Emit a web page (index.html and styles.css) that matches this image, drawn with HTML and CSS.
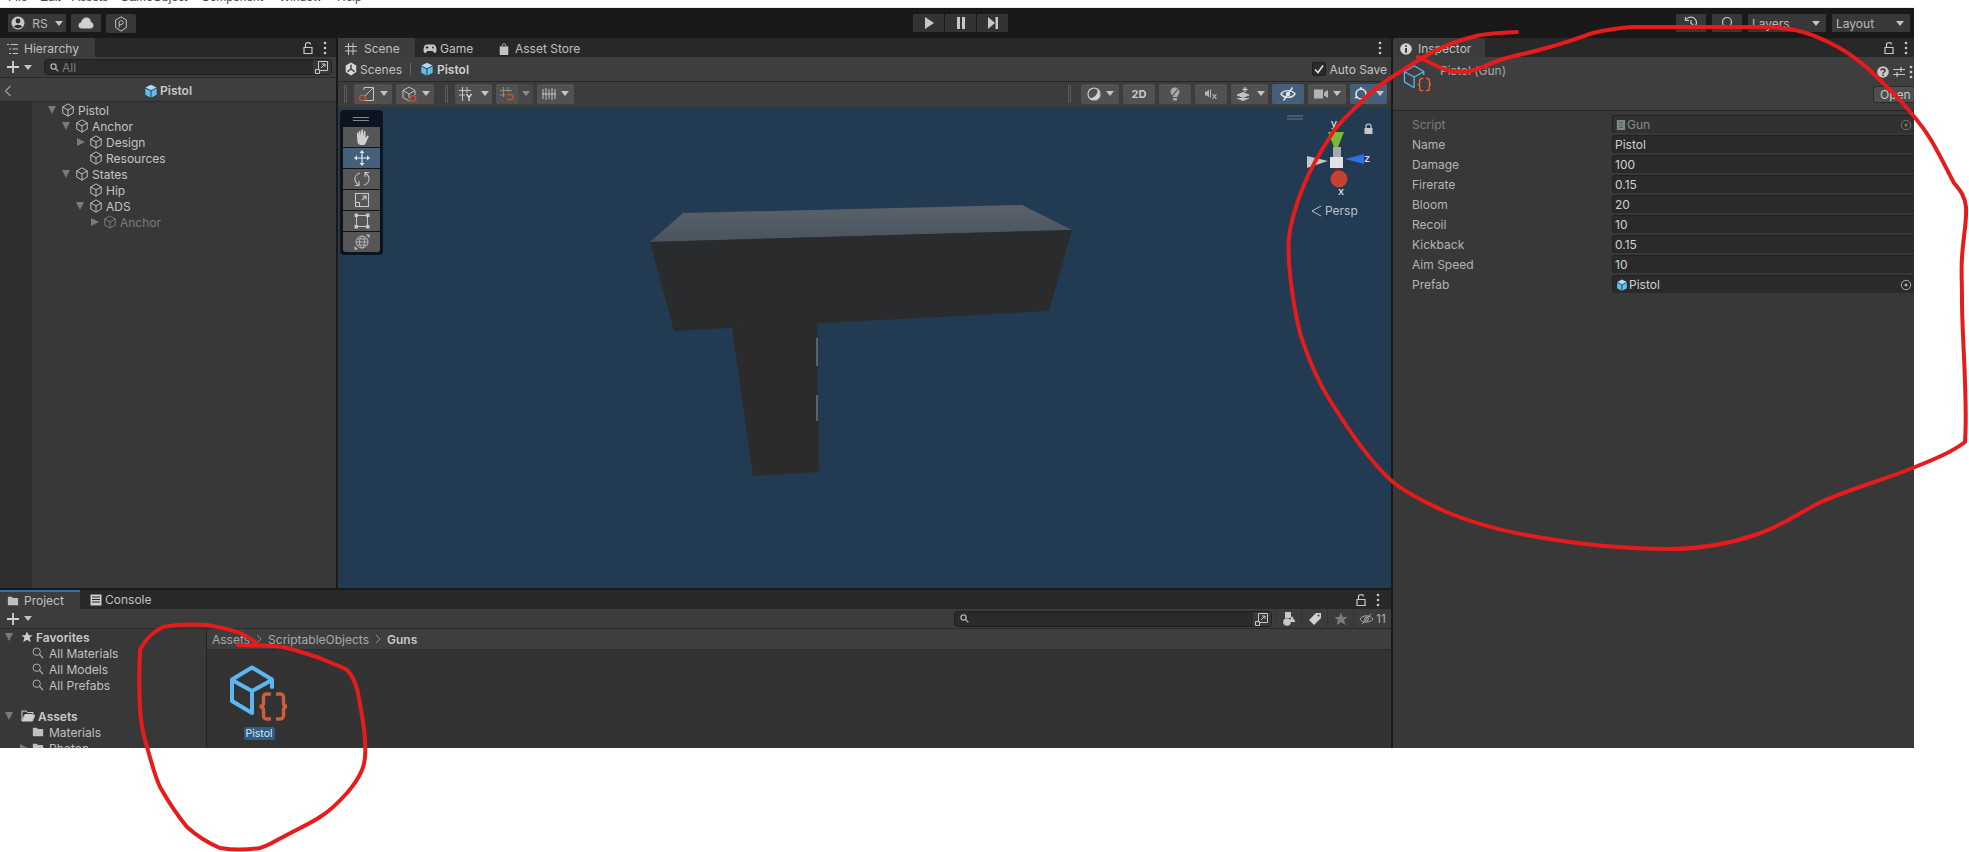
FILE: index.html
```html
<!DOCTYPE html>
<html lang="en">
<head>
<meta charset="utf-8">
<title>Unity Editor</title>
<link rel="stylesheet" href="styles.css">
</head>
<body>
<svg class="defs" aria-hidden="true">
  <defs>
    <symbol id="cube" viewBox="0 0 16 16"><path d="M8 1 14 4.5V11.5L8 15 2 11.5V4.5ZM2 4.5 8 8 14 4.5M8 8V15" fill="none" stroke="currentColor" stroke-width="1.1"/></symbol>
    <symbol id="prefab" viewBox="0 0 16 16"><path d="M8 .8 14.4 4 8 7.2 1.600 4Z" fill="#a9def8"/><path d="M1.500 5 7.400 8V15.500L1.500 12.400Z" fill="#5cbff0"/><path d="M14.500 5 8.600 8V15.500L14.500 12.400Z" fill="#5cbff0"/></symbol>
    <symbol id="lock" viewBox="0 0 12 14"><path d="M2 6.500H10V12.500H2ZM3.500 6.500V3.500C3.500 1 8.500 1 8.500 3.500" fill="none" stroke="currentColor" stroke-width="1.200"/></symbol>
    <symbol id="dots" viewBox="0 0 4 14"><circle cx="2" cy="2" r="1.300" fill="currentColor"/><circle cx="2" cy="7" r="1.300" fill="currentColor"/><circle cx="2" cy="12" r="1.300" fill="currentColor"/></symbol>
    <symbol id="mag" viewBox="0 0 14 14"><circle cx="5.500" cy="5.500" r="4.300" fill="none" stroke="currentColor" stroke-width="1"/><path d="M9 9 13 13" stroke="currentColor" stroke-width="1.300"/></symbol>
    <symbol id="ext" viewBox="0 0 14 14"><path d="M3.500 9V1.500H12.500V10.500H5M.5 9.500H4.500V13.500H.5ZM6 8 10 4M7 4H10V7" fill="none" stroke="currentColor" stroke-width="1"/></symbol>
    <symbol id="folder" viewBox="0 0 14 12"><path d="M1 1H5.500L7 2.500H13V11H1Z" fill="currentColor"/></symbol>
    <symbol id="target" viewBox="0 0 12 12"><circle cx="6" cy="6" r="4.700" fill="none" stroke="currentColor"/><circle cx="6" cy="6" r="1.500" fill="currentColor"/></symbol>
  </defs>
</svg>

<div class="app">
  <nav class="menubar">
    <span class="m1">File</span><span class="m2">Edit</span><span class="m3">Assets</span><span class="m4">GameObject</span><span class="m5">Component</span><span class="m6">Window</span><span class="m7">Help</span>
  </nav>

  <header class="toolbar">
    <div class="tb-left">
      <div class="tb-btn account">
        <svg class="i14" viewBox="0 0 14 14"><circle cx="7" cy="7" r="6.500" fill="#c8c8c8"/><circle cx="7" cy="5" r="2.400" fill="#2d2d2d"/><path d="M2.800 10.800C4 8 10 8 11.200 10.800 9 12.600 5 12.600 2.800 10.800Z" fill="#2d2d2d"/></svg>
        <span>RS</span><i class="tri"></i>
      </div>
      <div class="tb-btn cloud">
        <svg class="i16" viewBox="0 0 16 12"><path d="M4 11.500C1.500 11.500.5 9.800.5 8.300.5 6.500 2 5.500 3 5.500 3.500 2.500 6 .5 8.500 .5 11 .5 12.800 2.500 13 5 14.500 5.300 15.500 6.700 15.500 8.300 15.500 10 14.300 11.500 12.500 11.500Z" fill="#d0d0d0"/></svg>
      </div>
      <div class="tb-btn collab">
        <svg class="i16" viewBox="0 0 16 18"><path d="M8 1 14 4.500V13L8 17 2 13V4.500Z" fill="none" stroke="#c8c8c8" stroke-width="1.100"/><path d="M6 13V7C6 4.500 10.500 4.500 10.500 7.300S6 10 6 10" fill="none" stroke="#c8c8c8" stroke-width="1.100"/></svg>
      </div>
    </div>
    <div class="tb-play">
      <div class="play-btn"><svg class="i12" viewBox="0 0 12 12"><path d="M2 0 11 6 2 12Z" fill="#c8c8c8"/></svg></div>
      <div class="play-btn"><svg class="i12" viewBox="0 0 12 12"><path d="M2 0H5V12H2ZM7 0H10V12H7Z" fill="#c8c8c8"/></svg></div>
      <div class="play-btn"><svg class="i12" viewBox="0 0 12 12"><path d="M1 0 8 6 1 12ZM8.500 0H11V12H8.500Z" fill="#c8c8c8"/></svg></div>
    </div>
    <div class="tb-right">
      <div class="tb-btn history">
        <svg class="i14" viewBox="0 0 14 14"><path d="M2.500 3.500A5.500 5.500 0 1 1 2 9M1.500 1V4.500H5M7 4V7.500L9.500 9" fill="none" stroke="#c8c8c8" stroke-width="1.200"/></svg>
      </div>
      <div class="tb-btn search">
        <svg class="i14" viewBox="0 0 14 14"><circle cx="7" cy="6" r="4.500" fill="none" stroke="#c8c8c8" stroke-width="1.200"/><path d="M10 10 12 13" stroke="#c8c8c8" stroke-width="1.200"/></svg>
      </div>
      <div class="tb-btn drop layers"><span>Layers</span><i class="tri"></i></div>
      <div class="tb-btn drop layout"><span>Layout</span><i class="tri"></i></div>
    </div>
  </header>

  <main class="workspace">
    <div class="left-col">
      <div class="upper">
        <section class="panel hierarchy">
          <div class="tabs">
            <div class="tab tab-h active">
              <svg class="i12" viewBox="0 0 12 12"><path d="M0 1.500H2M3.500 1.500H11M2 6H4M5.500 6H11M2 10.500H4M5.500 10.500H11" stroke="#c0c0c0" fill="none"/></svg>
              <span>Hierarchy</span>
            </div>
            <div class="tab-tools"><svg class="lock"><use href="#lock"/></svg><svg class="dots"><use href="#dots"/></svg></div>
          </div>
          <div class="h-tools">
            <svg class="plus" viewBox="0 0 14 14"><path d="M7 1V13M1 7H13" stroke="#d0d0d0" stroke-width="1.800"/></svg>
            <i class="tri h-tri"></i>
            <div class="searchbox h-search">
              <svg class="i8" viewBox="0 0 14 14"><circle cx="5.500" cy="5.500" r="4" fill="none" stroke="#b0b0b0" stroke-width="2"/><path d="M8.500 8.500 13 13" stroke="#b0b0b0" stroke-width="2"/></svg>
              <span class="s-ph">All</span>
              <span class="s-ext"><svg class="i14"><use href="#ext"/></svg></span>
            </div>
          </div>
          <div class="prefab-bar">
            <svg class="chev" viewBox="0 0 8 12"><path d="M6.500 1 1.500 6 6.500 11" fill="none" stroke="#9a9a9a" stroke-width="1.300"/></svg>
            <div class="prefab-title"><svg class="i14"><use href="#prefab"/></svg><b>Pistol</b></div>
          </div>
          <div class="tree">
            <div class="gutter"></div>
            <ul class="rows">
              <li class="row d0"><i class="arrow down"></i><svg class="i14"><use href="#cube"/></svg><span>Pistol</span></li>
              <li class="row d1"><i class="arrow down"></i><svg class="i14"><use href="#cube"/></svg><span>Anchor</span></li>
              <li class="row d2"><i class="arrow right"></i><svg class="i14"><use href="#cube"/></svg><span>Design</span></li>
              <li class="row d2"><i class="arrow none"></i><svg class="i14"><use href="#cube"/></svg><span>Resources</span></li>
              <li class="row d1"><i class="arrow down"></i><svg class="i14"><use href="#cube"/></svg><span>States</span></li>
              <li class="row d2"><i class="arrow none"></i><svg class="i14"><use href="#cube"/></svg><span>Hip</span></li>
              <li class="row d2"><i class="arrow down"></i><svg class="i14"><use href="#cube"/></svg><span>ADS</span></li>
              <li class="row d3 dim"><i class="arrow right"></i><svg class="i14"><use href="#cube"/></svg><span>Anchor</span></li>
            </ul>
          </div>
        </section>

        <section class="panel scene">
          <div class="tabs">
            <div class="tab tab-scene active">
              <svg class="i12" viewBox="0 0 12 12"><path d="M3.500 0V12M8 0V12M0 3.500H12M0 8H12" stroke="#c4c4c4" fill="none"/></svg>
              <span>Scene</span>
            </div>
            <div class="tab tab-game">
              <svg class="i14" viewBox="0 0 14 10"><path d="M3.500 .5H10.500C12.500 .5 13.500 3 13.500 6 13.500 9 12 10 10.500 8L9.500 7H4.500L3.500 8C2 10 .5 9 .5 6 .5 3 1.500 .5 3.500 .5Z" fill="#c4c4c4"/><circle cx="10" cy="3.500" r="1" fill="#333"/><path d="M2.500 3.500H5.500M4 2V5" stroke="#333"/></svg>
              <span>Game</span>
            </div>
            <div class="tab tab-store">
              <svg class="i12" viewBox="0 0 10 14"><path d="M0 4H10V14H0Z" fill="#c4c4c4"/><path d="M3 4V2C3 .5 7 .5 7 2V4" fill="none" stroke="#c4c4c4"/></svg>
              <span>Asset Store</span>
            </div>
            <div class="tab-tools tools-scene"><svg class="dots"><use href="#dots"/></svg></div>
          </div>
          <div class="crumb-bar">
            <svg class="i14" viewBox="0 0 14 16"><path d="M7 .5 13 4V11.500L7 15.500 1 11.500V4Z" fill="#d8d8d8"/><path d="M7 3V8M7 8 3 11M7 8 11 11" stroke="#3e3e3e" stroke-width="1.600"/></svg>
            <span class="c-scenes">Scenes</span>
            <i class="c-sep"></i>
            <svg class="i14"><use href="#prefab"/></svg>
            <b>Pistol</b>
            <div class="autosave"><i class="check"><svg class="i10" viewBox="0 0 10 10"><path d="M1 5.500 4 8.500 9 1.500" fill="none" stroke="#e4e4e4" stroke-width="1.500"/></svg></i><span>Auto Save</span></div>
          </div>
          <div class="scene-tools">
            <div class="stgroup">
              <i class="grip"></i>
              <div class="sbtn w38">
                <svg class="i16" viewBox="0 0 16 16"><path d="M5 4V1.500H14.500V14.500H5.500M6 10 14 2" fill="none" stroke="#c4c4c4"/><circle cx="3.500" cy="12" r="2.800" fill="none" stroke="#d0552f" stroke-width="1.200"/></svg><i class="tri s-tri"></i>
              </div>
              <div class="sbtn w38">
                <svg class="i16" viewBox="0 0 16 16"><path d="M8 1 14 4.500V9M8 15 2 11.500V4.500L8 1M2 4.500 8 8 14 4.500M8 8V12" fill="none" stroke="#c4c4c4"/><circle cx="12" cy="12.500" r="2.800" fill="none" stroke="#d0552f" stroke-width="1.200"/></svg><i class="tri s-tri"></i>
              </div>
              <i class="grip grip2"></i>
              <div class="split">
                <div class="sbtn w22"><svg class="i14" viewBox="0 0 14 14"><path d="M3.500 0V14M8 0V6M0 3.500H12M0 8H6" stroke="#c4c4c4" fill="none"/><path d="M7.500 7 10 10.500 12.500 7M10 10.500V14" stroke="#e0e0e0" fill="none" stroke-width="1.300"/></svg></div>
                <div class="sbtn w15"><i class="tri"></i></div>
              </div>
              <div class="split">
                <div class="sbtn w22"><svg class="i14" viewBox="0 0 14 14"><path d="M3.500 0V10M8 0V5M0 3.500H12M0 8H5" stroke="#8c8c8c" fill="none"/><path d="M7 7.500H11C13.500 7.500 13.500 12.500 11 12.500H7" stroke="#c0502e" fill="none" stroke-width="1.600"/></svg></div>
                <div class="sbtn w15 off"><i class="tri"></i></div>
              </div>
              <div class="sbtn w37">
                <svg class="i14" viewBox="0 0 14 14"><path d="M1 2V12M4 1V13M7 2V12M10 1V13M13 2V12M0 7H14" stroke="#c4c4c4" fill="none"/></svg><i class="tri s-tri"></i>
              </div>
            </div>
            <div class="stgroup">
              <i class="grip grip3"></i>
              <div class="sbtn w38">
                <svg class="i14" viewBox="0 0 14 14"><circle cx="7" cy="7" r="6" fill="none" stroke="#d0d0d0" stroke-width="1.200"/><path d="M10.500 2.500C11 7 8 10.500 3 11.500 5 13.500 9.500 13.500 11.500 11 13.500 8.500 13 4.500 10.500 2.500Z" fill="#d0d0d0"/></svg><i class="tri s-tri"></i>
              </div>
              <div class="sbtn w32 label">2D</div>
              <div class="sbtn w32"><svg class="i14" viewBox="0 0 10 14"><path d="M5 .5C8 .5 9.500 2.500 9.500 5 9.500 7 7.500 8 7.500 10H2.500C2.500 8 .5 7 .5 5 .5 2.500 2 .5 5 .5ZM3 11H7V13.500H3Z" fill="#a8a8a8"/><path d="M9.500 0 1.500 10" stroke="#515151" stroke-width="1.200"/></svg></div>
              <div class="sbtn w32"><svg class="i14" viewBox="0 0 14 14"><path d="M1 4.500H3L5 2.500V10.500L3 8.500H1Z" fill="#b8b8b8"/><path d="M6.500 2.500V10.500" stroke="#b8b8b8"/><path d="M8.500 7 12.500 12M12.500 7 8.500 12" stroke="#b8b8b8" stroke-width="1.200"/></svg></div>
              <div class="split">
                <div class="sbtn w23"><svg class="i14" viewBox="0 0 14 14"><path d="M1 8 7 5.500 13 8 7 10.500Z M1 11 7 13.500 13 11" fill="#c4c4c4" stroke="#c4c4c4"/><path d="M9 0V5M6.500 2.500H11.500" stroke="#c4c4c4" stroke-width="1.300"/></svg></div>
                <div class="sbtn w14"><i class="tri"></i></div>
              </div>
              <div class="sbtn w32 on"><svg class="i16" viewBox="0 0 16 14"><path d="M1 7C4 2.500 12 2.500 15 7 12 11.500 4 11.500 1 7Z" fill="none" stroke="#e4e4e4" stroke-width="1.400"/><circle cx="8" cy="7" r="2.200" fill="#e4e4e4"/><path d="M12.500 .5 3.500 13.500" stroke="#e4e4e4" stroke-width="1.400"/></svg></div>
              <div class="sbtn w38">
                <svg class="i14" viewBox="0 0 14 12"><path d="M0 1.500H9V10.500H0ZM10 4.500 14 2V10L10 7.500Z" fill="#b4b4b4"/></svg><i class="tri s-tri"></i>
              </div>
              <div class="split">
                <div class="sbtn w22 on"><svg class="i14" viewBox="0 0 14 14"><circle cx="7" cy="7" r="5" fill="none" stroke="#e4e4e4" stroke-width="1.500"/><path d="M7 0V3M1 11 3.500 9.500M13 11 10.500 9.500" stroke="#e4e4e4" stroke-width="1.500"/></svg></div>
                <div class="sbtn w15 on"><i class="tri"></i></div>
              </div>
            </div>
          </div>
          <div class="viewport">
            <svg class="scene-art" viewBox="339 107 1052 481">
              <defs>
                <linearGradient id="topface" x1="0" y1="0" x2="0" y2="1"><stop offset="0" stop-color="#5a6169"/><stop offset="1" stop-color="#485460"/></linearGradient>
              </defs>
              <path d="M683 213 1022 205 1072 230 650 242Z" fill="url(#topface)"/>
              <path d="M650 242 1072 230 1049 311 674 331Z" fill="#2a2b2c"/>
              <path d="M732 328 817 323 819 472 753 476Z" fill="#2b2b2c"/>
              <path d="M817 338V366M817 395V421" stroke="#8d98a2" stroke-width="1"/>
              <path d="M1287 116H1303M1287 119H1303" stroke="#6e7d8c"/>
              <path d="M1364.500 128H1372.500V134H1364.500Z" fill="#c8c8c8"/><path d="M1366 128V126C1366 123.500 1371 123.500 1371 126V128" fill="none" stroke="#c8c8c8" stroke-width="1.200"/>
              <path d="M1328 132H1344L1336 152Z" fill="#7ab83a"/>
              <path d="M1333 147H1341V157H1333Z" fill="#a8a8a8"/>
              <path d="M1307 156 1328 161 1307 168Z" fill="#c6c6c6"/>
              <path d="M1364 154V164L1345 159Z" fill="#2d6fe8"/>
              <path d="M1337 166 1331 176H1347Z" fill="#6e2a28"/>
              <circle cx="1339" cy="179" r="8.500" fill="#c8412f"/>
              <path d="M1330 157H1343V168H1330Z" fill="#dfe1e4"/>
              <text class="axis" x="1334" y="127" text-anchor="middle">y</text>
              <text class="axis" x="1367" y="162" text-anchor="middle">z</text>
              <text class="axis" x="1341" y="195" text-anchor="middle">x</text>
              <path d="M1321 206 1312 211 1321 216" fill="none" stroke="#b9c2cb" stroke-width="1"/>
              <text class="persp" x="1325" y="215">Persp</text>
            </svg>
            <div class="tools-overlay">
              <div class="ov-grip"></div>
              <div class="ov-btn"><svg class="i16" viewBox="0 0 16 16"><path d="M3 7V4C3 3 4.500 3 4.500 4V7L5 2.500C5 1.500 6.500 1.500 6.500 2.500V7L7.500 1C7.500 0 9 0 9 1V7L10 2.500C10 1.500 11.500 1.500 11.500 2.500V9L13 7C14 6 15 7 14.500 8L11.500 14.500C11 15.500 10 16 9 16H7C5 16 3.500 14.500 3.500 13Z" fill="#d0d0d0"/></svg></div>
              <div class="ov-btn on"><svg class="i16" viewBox="0 0 16 16"><path d="M8 2V14M2 8H14" stroke="#dfe6ee" stroke-width="1.200"/><path d="M8 0 10.500 3H5.500ZM8 16 10.500 13H5.500ZM0 8 3 5.500V10.500ZM16 8 13 5.500V10.500Z" fill="#dfe6ee"/></svg></div>
              <div class="ov-btn"><svg class="i16" viewBox="0 0 16 16"><path d="M6 2C2.500 3 .5 6 1 9 1.500 11.500 3 13 5 14M5 10V14.500H1M10 14C13.500 13 15.500 10 15 7 14.500 4.500 13 3 11 2M11 6V1.500H15" fill="none" stroke="#c8c8c8" stroke-width="1.100"/></svg></div>
              <div class="ov-btn"><svg class="i16" viewBox="0 0 16 16"><path d="M1.500 1.500H14.500V14.500H1.500ZM1.500 10.500H5.500V14.500M8 8 12 4M8.500 4H12V7.500" fill="none" stroke="#c8c8c8" stroke-width="1.100"/></svg></div>
              <div class="ov-btn"><svg class="i16" viewBox="0 0 16 16"><path d="M4 2.500H12M4 13.500H12M2.500 4V12M13.500 4V12" stroke="#c8c8c8"/><path d="M.5 .5H4V4H.5ZM12 .5H15.500V4H12ZM.5 12H4V15.500H.5ZM12 12H15.500V15.500H12Z" fill="#c8c8c8"/></svg></div>
              <div class="ov-btn"><svg class="i16" viewBox="0 0 16 16"><circle cx="8" cy="8" r="6" fill="none" stroke="#b4b4b4"/><ellipse cx="8" cy="8" rx="2.500" ry="6" fill="none" stroke="#b4b4b4"/><path d="M2 8H14M3 5H13M3 11H13" stroke="#b4b4b4"/><path d="M12 .5H15.500V4ZM4 15.500H.5V12Z" fill="#c8c8c8"/></svg></div>
            </div>
          </div>
        </section>
      </div>

      <section class="panel project">
        <div class="tabs">
          <div class="tab tab-project active">
            <svg class="i12"><use href="#folder"/></svg><span>Project</span>
          </div>
          <div class="tab tab-console">
            <svg class="i12" viewBox="0 0 12 12"><path d="M.5 .5H11.500V11.500H.5Z" fill="#cfcfcf"/><path d="M2 3H10M2 5.500H10M2 8H10" stroke="#2a2a2a"/></svg><span>Console</span>
          </div>
          <div class="tab-tools tools-project"><svg class="lock"><use href="#lock"/></svg><svg class="dots"><use href="#dots"/></svg></div>
        </div>
        <div class="p-tools">
          <svg class="plus" viewBox="0 0 14 14"><path d="M7 1V13M1 7H13" stroke="#d0d0d0" stroke-width="1.800"/></svg>
          <i class="tri h-tri"></i>
          <div class="searchbox p-search">
            <svg class="i8" viewBox="0 0 14 14"><circle cx="5.500" cy="5.500" r="4" fill="none" stroke="#b0b0b0" stroke-width="2"/><path d="M8.500 8.500 13 13" stroke="#b0b0b0" stroke-width="2"/></svg>
            <span class="s-ext"><svg class="i14"><use href="#ext"/></svg></span>
          </div>
          <div class="p-btn"><svg class="i14" viewBox="0 0 14 14"><path d="M3 0H9V6H3Z" fill="#c8c8c8"/><circle cx="5" cy="10" r="3.800" fill="#c8c8c8"/><path d="M10 4 13.500 10H7Z" fill="#c8c8c8"/></svg></div>
          <div class="p-btn"><svg class="i14" viewBox="0 0 14 14"><path d="M1 8 8 1H13V6L6 13Z" fill="#d0d0d0"/><circle cx="10.500" cy="3.500" r="1" fill="#3c3c3c"/></svg></div>
          <div class="p-btn"><svg class="i14" viewBox="0 0 14 14"><path d="M7 .5 9 5H13.500L10 8 11.500 13 7 10.200 2.500 13 4 8 .5 5H5Z" fill="#7a7a7a"/></svg></div>
          <div class="p-btn wide"><svg class="i14 wide-eye" viewBox="0 0 16 12"><path d="M1 6C4 1.500 11 1.500 15 6 11 10.500 4 10.500 1 6Z" fill="none" stroke="#b0b0b0"/><path d="M13 .5 3 11.500" stroke="#b0b0b0"/><circle cx="8" cy="6" r="2" fill="none" stroke="#b0b0b0"/></svg><span>11</span></div>
        </div>
        <div class="p-body">
          <aside class="p-tree">
            <div class="pt-row head"><i class="arrow down pa"></i><svg class="i12" viewBox="0 0 14 14"><path d="M7 .5 9 5H13.500L10 8 11.500 13 7 10.200 2.500 13 4 8 .5 5H5Z" fill="#cfcfcf"/></svg><b>Favorites</b></div>
            <div class="pt-row sub"><svg class="i12"><use href="#mag"/></svg><span>All Materials</span></div>
            <div class="pt-row sub"><svg class="i12"><use href="#mag"/></svg><span>All Models</span></div>
            <div class="pt-row sub"><svg class="i12"><use href="#mag"/></svg><span>All Prefabs</span></div>
            <div class="pt-row head assets"><i class="arrow down pa"></i><svg class="i14" viewBox="0 0 14 12"><path d="M1 11V1H5L6.500 2.500H12V4.500H4L1 11H11.500L14 4.500" fill="none" stroke="#cfcfcf"/><path d="M4 5H13.500L11 11H1.500Z" fill="#cfcfcf"/></svg><b>Assets</b></div>
            <div class="pt-row sub"><svg class="i12"><use href="#folder"/></svg><span>Materials</span></div>
            <div class="pt-row sub photon"><i class="arrow right pb"></i><svg class="i12"><use href="#folder"/></svg><span>Photon</span></div>
          </aside>
          <div class="p-main">
            <div class="breadcrumbs">
              <span>Assets</span><svg class="bc" viewBox="0 0 6 10"><path d="M1 1 5 5 1 9" fill="none" stroke="#8c8c8c"/></svg>
              <span>ScriptableObjects</span><svg class="bc" viewBox="0 0 6 10"><path d="M1 1 5 5 1 9" fill="none" stroke="#8c8c8c"/></svg>
              <b>Guns</b>
            </div>
            <div class="assets-grid">
              <figure class="asset">
                <svg class="asset-icon" viewBox="230 665 60 58">
                  <path d="M273 687V679.500L253 667.500 233 679.500V701L253 713M233 680 253 691 273 680M253 691V713" fill="none" stroke="#5db7f3" stroke-width="4" stroke-linejoin="round" stroke-linecap="round"/>
                  <path d="M272 694H268C265 694 264.500 695.500 264.500 698V703C264.500 705.500 263 706.500 260.500 706.500 263 706.500 264.500 707.500 264.500 710V715C264.500 717.500 265 719 268 719H272M277 694H281C284 694 284.500 695.500 284.500 698V703C284.500 705.500 286 706.500 288 706.500 286 706.500 284.500 707.500 284.500 710V715C284.500 717.500 284 719 281 719H277" fill="none" stroke="#cf5f3c" stroke-width="3.400"/>
                </svg>
                <figcaption>Pistol</figcaption>
              </figure>
            </div>
          </div>
        </div>
      </section>
    </div>

    <section class="panel inspector">
      <div class="tabs">
        <div class="tab tab-insp active">
          <svg class="i12" viewBox="0 0 12 12"><circle cx="6" cy="6" r="5.800" fill="#d4d4d4"/><path d="M6 2.200V3.800M6 5V9.800" stroke="#333" stroke-width="1.800"/></svg>
          <span>Inspector</span>
        </div>
        <div class="tab-tools tools-insp"><svg class="lock"><use href="#lock"/></svg><svg class="dots"><use href="#dots"/></svg></div>
      </div>
      <div class="insp-head">
        <svg class="insp-icon" viewBox="230 665 60 58">
          <path d="M273 687V679.500L253 667.500 233 679.500V701L253 713M233 680 253 691 273 680M253 691V713" fill="none" stroke="#5db7f3" stroke-width="2.600" stroke-linejoin="round"/>
          <path d="M272 694H268C265 694 264.500 695.500 264.500 698V703C264.500 705.500 263 706.500 260.500 706.500 263 706.500 264.500 707.500 264.500 710V715C264.500 717.500 265 719 268 719H272M277 694H281C284 694 284.500 695.500 284.500 698V703C284.500 705.500 286 706.500 288 706.500 286 706.500 284.500 707.500 284.500 710V715C284.500 717.500 284 719 281 719H277" fill="none" stroke="#e0663a" stroke-width="2.800"/>
        </svg>
        <span class="insp-title">Pistol (Gun)</span>
        <div class="insp-actions">
          <div class="insp-icons">
            <svg class="i12" viewBox="0 0 12 12"><circle cx="6" cy="6" r="5.800" fill="#c8c8c8"/><path d="M4 4.500C4 2.500 8 2.500 8 4.500 8 6 6 6 6 7.500M6 8.500V10" fill="none" stroke="#333" stroke-width="1.500"/></svg>
            <svg class="i12" viewBox="0 0 12 12"><path d="M0 3.500H12M0 8.500H12M8 1V6M4 6V11" stroke="#c8c8c8" stroke-width="1.200"/></svg>
            <svg class="dots"><use href="#dots"/></svg>
          </div>
          <div class="open-btn">Open</div>
        </div>
      </div>
      <div class="fields">
        <div class="field dim"><label>Script</label><div class="val"><svg class="i10" viewBox="0 0 10 12"><path d="M0 0H10V12H0Z" fill="#7d8a80"/><path d="M3 3H7M3 6H7M3 9H7" stroke="#3c4a40"/></svg><span>Gun</span><svg class="pick"><use href="#target"/></svg></div></div>
        <div class="field"><label>Name</label><div class="val txt">Pistol</div></div>
        <div class="field"><label>Damage</label><div class="val txt">100</div></div>
        <div class="field"><label>Firerate</label><div class="val txt">0.15</div></div>
        <div class="field"><label>Bloom</label><div class="val txt">20</div></div>
        <div class="field"><label>Recoil</label><div class="val txt">10</div></div>
        <div class="field"><label>Kickback</label><div class="val txt">0.15</div></div>
        <div class="field"><label>Aim Speed</label><div class="val txt">10</div></div>
        <div class="field"><label>Prefab</label><div class="val"><svg class="i10 i-pf"><use href="#prefab"/></svg><span>Pistol</span><svg class="pick"><use href="#target"/></svg></div></div>
      </div>
    </section>
  </main>
</div>

<svg class="annotation" viewBox="0 0 1969 852" aria-hidden="true">
  <path class="ink" d="M1517 32C1500 33 1488 33 1476 36C1455 41 1438 48 1422 58C1400 72 1378 84 1360 103C1345 118 1336 126 1330 137C1318 155 1310 170 1303 187C1296 205 1291 220 1289 237C1287 258 1292 300 1300 333C1308 358 1318 382 1331 402C1350 432 1370 462 1394 483C1412 497 1428 503 1444 511C1470 522 1498 530 1526 535C1580 545 1625 549 1670 549C1703 549 1732 543 1758 534C1782 526 1800 512 1821 502C1852 488 1884 480 1915 467C1935 459 1952 452 1965 442C1968 400 1962 340 1962 300C1962 280 1961 270 1962 258C1963 238 1967 222 1966 207C1965 196 1960 190 1954 183C1946 168 1940 155 1931 140C1925 130 1918 121 1911 113C1901 100 1889 89 1877 77C1865 65 1852 55 1838 47C1825 40 1810 33 1795 30C1775 26 1760 27 1748 27H1632C1620 28 1605 30 1593 33C1578 38 1562 44 1546 48C1530 53 1515 55 1500 60C1488 64 1477 71 1465 72C1455 73 1448 71 1441 68C1433 64 1425 60 1418 57"/>
  <path class="ink" d="M238 645C255 646 270 645 283 647C296 650 308 654 320 658C330 663 339 665 347 670C353 676 356 684 358 693C361 710 365 728 365 743C366 755 365 763 362 770C358 780 353 786 347 793C338 803 330 811 320 817C308 825 295 830 283 837C275 841 268 846 260 848C247 850 233 850 220 848C208 843 197 836 187 827C177 815 168 801 160 787C154 774 151 760 147 747C143 735 141 722 140 710C139 690 139 670 140 650C145 640 152 632 163 627C177 624 192 624 207 625C219 627 230 629 240 633C247 636 253 640 258 645"/>
</svg>
</body>
</html>
```

FILE: styles.css
```css
* { box-sizing: border-box; }
html, body { margin: 0; padding: 0; }
body {
  width: 1969px;
  height: 852px;
  background: #fff;
  font-family: Inter, "Noto Sans", sans-serif;
  font-size: 12px;
  color: #c4c4c4;
  position: relative;
  overflow: hidden;
}
ul { list-style: none; margin: 0; padding: 0; }
figure { margin: 0; }
i { font-style: normal; display: block; }
b { font-weight: 600; }
svg { display: block; flex: none; }
.defs { position: absolute; width: 0; height: 0; }

.i8 { width: 9px; height: 9px; }
.i10 { width: 10px; height: 10px; }
.i12 { width: 12px; height: 12px; }
.i14 { width: 14px; height: 14px; }
.i16 { width: 16px; height: 16px; }

.app { width: 1914px; height: 748px; display: flex; flex-direction: column; }

/* clipped menu: fixed slots that match the menu's item spacing */
.menubar {
  height: 8px;
  overflow: hidden;
  background: #fff;
  border-bottom: 1px solid #ececec;
  color: #444;
  display: flex;
  padding-left: 8px;
  font-family: "Liberation Sans", Arial, sans-serif;
  font-size: 12px;
  line-height: 12px;
}
.menubar span { margin-top: -9px; height: 16px; flex: none; }
.m1 { width: 32px; }
.m2 { width: 32px; }
.m3 { width: 48px; }
.m4 { width: 81px; }
.m5 { width: 78px; }
.m6 { width: 58px; }
.m7 { width: 30px; }

/* top toolbar */
.toolbar {
  height: 30px;
  background: #191919;
  display: flex;
  align-items: flex-start;
  justify-content: space-between;
  padding: 6px 4px 0 8px;
  position: relative;
}
.tb-left, .tb-right, .tb-play { display: flex; }
.tb-left { gap: 5px; }
.tb-btn {
  height: 18px;
  background: #383838;
  display: flex;
  align-items: center;
  justify-content: center;
  color: #b8b8b8;
}
.account { width: 58px; gap: 7px; }
.cloud { width: 30px; }
.collab { width: 30px; height: 19px; border-radius: 2px; }
.tri {
  width: 0; height: 0;
  border-left: 4px solid transparent;
  border-right: 4px solid transparent;
  border-top: 5px solid #c4c4c4;
}
.tb-play { position: absolute; left: 913px; top: 6px; gap: 1px; }
.play-btn { width: 31px; height: 18px; background: #333; display: flex; align-items: center; justify-content: center; }
.tb-right { gap: 6px; }
.history, .search { width: 30px; }
.drop { width: 78px; justify-content: space-between; padding: 0 6px 0 4px; }

/* workspace */
.workspace { flex: 1; min-height: 0; display: flex; background: #191919; gap: 2px; }
.left-col { width: 1391px; display: flex; flex-direction: column; gap: 2px; }
.upper { height: 550px; display: flex; gap: 2px; }
.panel { display: flex; flex-direction: column; background: #383838; overflow: hidden; min-width: 0; }
.hierarchy { width: 336px; }
.scene { flex: 1; }
.project { flex: 1; min-height: 0; }
.inspector { flex: 1; }

.tabs { height: 19px; background: #282828; display: flex; flex: none; position: relative; }
.tab { display: flex; align-items: center; gap: 5px; height: 19px; color: #c0c0c0; font-size: 12px; padding: 2px 0 0 7px; }
.tab.active { background: #3c3c3c; }
.tab-h { width: 95px; }
.tab-scene { width: 77px; gap: 7px; }
.tab-game { width: 83px; padding-left: 8px; gap: 3px; }
.tab-store { padding-left: 0; gap: 5px; }
.tab-project { width: 80px; border-top: 2px solid #3a72a8; padding-top: 0; gap: 5px; }
.tab-console { padding: 0 0 0 10px; gap: 3px; }
.tab-insp { width: 92px; border-radius: 3px 3px 0 0; gap: 6px; }
.tab-tools { margin-left: auto; display: flex; align-items: center; gap: 9px; padding-right: 9px; color: #c8c8c8; }
.lock { width: 12px; height: 14px; }
.dots { width: 4px; height: 14px; color: #c8c8c8; }

/* hierarchy */
.h-tools { height: 21px; background: #3c3c3c; border-bottom: 1px solid #2a2a2a; display: flex; align-items: center; padding-left: 6px; flex: none; }
.plus { width: 14px; height: 14px; }
.h-tri { margin-left: 4px; border-width: 5px 4px 0 4px; }
.searchbox { height: 16px; background: #2a2a2a; border: 1px solid #202020; border-radius: 4px; display: flex; align-items: center; padding-left: 5px; position: relative; color: #888; }
.h-search { width: 288px; margin-left: 12px; gap: 3px; }
.s-ph { color: #7c7c7c; font-size: 12px; }
.s-ext { margin-left: auto; width: 18px; height: 14px; background: #383838; display: flex; align-items: center; justify-content: center; color: #c8c8c8; border-radius: 0 3px 3px 0; }
.prefab-bar { height: 24px; background: #3e3e3e; border-bottom: 1px solid #2a2a2a; display: flex; align-items: center; padding: 2px 0 0 4px; flex: none; position: relative; }
.chev { width: 8px; height: 12px; }
.prefab-title { display: flex; align-items: center; gap: 2px; margin-left: 132px; font-size: 12px; color: #c8c8c8; }
.tree { flex: 1; display: flex; min-height: 0; }
.gutter { width: 32px; background: #2e2e2e; flex: none; }
.rows { flex: 1; }
.row { height: 16px; display: flex; align-items: center; font-size: 12px; color: #c4c4c4; }
.row svg { color: #c4c4c4; margin-right: 3px; }
.d0 { padding-left: 15px; }
.d1 { padding-left: 29px; }
.d2 { padding-left: 43px; }
.d3 { padding-left: 57px; }
.row.dim, .row.dim svg { color: #7b7b7b; }
.arrow { width: 14px; height: 10px; flex: none; position: relative; }
.arrow.down::before {
  content: ""; position: absolute; left: 1px; top: 1px;
  border-left: 4px solid transparent; border-right: 4px solid transparent; border-top: 8px solid #7a7a7a;
}
.arrow.right::before {
  content: ""; position: absolute; left: 2px; top: 1px;
  border-top: 4px solid transparent; border-bottom: 4px solid transparent; border-left: 8px solid #7a7a7a;
}

/* scene */
.crumb-bar { height: 25px; background: #3e3e3e; border-bottom: 1px solid #262626; display: flex; align-items: center; padding: 0 4px 0 6px; flex: none; color: #c4c4c4; }
.c-scenes { margin-left: 2px; }
.c-sep { width: 1px; height: 12px; background: #666; margin: 0 9px 0 8px; }
.crumb-bar b { margin-left: 3px; color: #d0d0d0; }
.autosave { margin-left: auto; display: flex; align-items: center; gap: 3px; }
.check { width: 14px; height: 14px; background: #2a2a2a; border: 1px solid #1c1c1c; border-radius: 2px; display: flex; align-items: center; justify-content: center; }
.scene-tools { height: 25px; background: #3c3c3c; display: flex; justify-content: space-between; align-items: center; padding: 0 4px 2px 6px; flex: none; }
.stgroup { display: flex; align-items: center; gap: 4px; }
.grip { width: 3px; height: 18px; border-left: 1px solid #5c5c5c; border-right: 1px solid #5c5c5c; margin-right: 3px; }
.grip2 { margin-left: 7px; }
.grip3 { margin-right: 6px; }
.sbtn { height: 20px; background: #515151; border-radius: 2px; display: flex; align-items: center; justify-content: center; gap: 5px; }
.s-tri { border-width: 5px 4px 0 4px; }
.w38 { width: 38px; }
.w37 { width: 37px; }
.w32 { width: 32px; }
.w22 { width: 22px; border-radius: 2px 0 0 2px; }
.w23 { width: 23px; border-radius: 2px 0 0 2px; }
.w15 { width: 15px; border-radius: 0 2px 2px 0; }
.w14 { width: 14px; border-radius: 0 2px 2px 0; }
.split { display: flex; gap: 0; }
.sbtn.off { opacity: .6; }
.sbtn.on { background: #46607c; }
.label { font-weight: 700; color: #c8c8c8; font-size: 11px; }

.viewport { flex: 1; min-height: 0; background: #223a52; position: relative; margin-left: 1px; }
.scene-art { position: absolute; inset: 0; width: 100%; height: 100%; }
.axis { font-family: Inter, sans-serif; font-size: 11px; fill: #d8dde2; font-weight: 500; }
.persp { font-family: Inter, sans-serif; font-size: 12px; fill: #b9c2cb; }
.tools-overlay {
  position: absolute;
  left: 1px; top: 3px;
  width: 43px;
  padding: 17px 3px 3px;
  background: #0c1420;
  border-radius: 4px;
  display: flex;
  flex-direction: column;
  gap: 1px;
}
.ov-grip { position: absolute; left: 13px; top: 7px; width: 16px; height: 4px; border-top: 1px solid #828a92; border-bottom: 1px solid #828a92; }
.ov-btn { height: 20px; background: #565656; display: flex; align-items: center; justify-content: center; }
.ov-btn:last-child { border-radius: 0 0 3px 3px; }
.ov-btn.on { background: #46607c; }

/* project */
.tools-project { padding-right: 11px; }
.p-tools { height: 20px; background: #3c3c3c; border-bottom: 1px solid #2a2a2a; display: flex; align-items: center; padding-left: 6px; flex: none; }
.p-search { width: 318px; margin-left: auto; margin-right: 3px; }
.p-btn { width: 26px; height: 20px; border-left: 1px solid #333; display: flex; align-items: center; justify-content: center; }
.p-btn.wide { width: 38px; gap: 2px; justify-content: flex-start; padding-left: 5px; font-size: 12px; color: #aaa; }
.wide-eye { width: 15px; }
.p-body { flex: 1; display: flex; min-height: 0; }
.p-tree { width: 207px; background: #383838; border-right: 1px solid #242424; flex: none; overflow: hidden; }
.pt-row { height: 16px; display: flex; align-items: center; gap: 6px; color: #c0c0c0; }
.pt-row b { color: #c8c8c8; }
.pt-row.head { padding-left: 4px; gap: 3px; }
.pt-row.sub { padding-left: 32px; gap: 5px; }
.pt-row.assets { margin-top: 15px; }
.pa { width: 14px; }
.photon { position: relative; }
.pb { position: absolute; left: 18px; top: 3px; }
.p-main { flex: 1; background: #333; display: flex; flex-direction: column; min-width: 0; }
.breadcrumbs { height: 21px; background: #3e3e3e; border-bottom: 1px solid #2c2c2c; display: flex; align-items: center; gap: 6px; padding-left: 5px; color: #aaa; flex: none; }
.breadcrumbs b { color: #c8c8c8; }
.bc { width: 6px; height: 10px; }
.assets-grid { flex: 1; padding: 15px 0 0 22px; position: relative; }
.asset { width: 60px; display: flex; flex-direction: column; align-items: center; gap: 4px; }
.asset-icon { width: 60px; height: 58px; }
.asset figcaption { background: #2c5d87; color: #dfe6ec; font-size: 10.5px; line-height: 13px; padding: 0 2px; border-radius: 2px; width: 31px; text-align: center; }

/* inspector */
.tools-insp { padding-right: 6px; gap: 9px; }
.insp-head { height: 54px; background: #3e3e3e; border-bottom: 1px solid #262626; display: flex; flex: none; position: relative; padding-left: 10px; }
.insp-icon { width: 29px; height: 29px; margin-top: 7px; }
.insp-title { margin: 6px 0 0 8px; color: #a8a8a8; line-height: 15px; }
.insp-actions { margin-left: auto; display: flex; flex-direction: column; align-items: flex-end; overflow: hidden; }
.insp-icons { display: flex; align-items: center; gap: 4px; height: 16px; margin-top: 7px; padding-right: 1px; }
.open-btn { width: 48px; height: 17px; margin: 6px -7px 0 0; background: #4e4e4e; border: 1px solid #2a2a2a; border-radius: 3px; color: #c8c8c8; line-height: 15px; padding-left: 6px; }
.fields { padding: 4px 0 0 19px; display: flex; flex-direction: column; gap: 2px; }
.field { display: flex; height: 18px; align-items: center; }
.field label { width: 200px; color: #b4b4b4; flex: none; }
.field.dim label { color: #7c7c7c; }
.val { flex: 1; height: 18px; background: #2a2a2a; border-top: 1px solid #212121; border-left: 1px solid #212121; border-radius: 3px 0 0 3px; display: flex; align-items: center; padding-left: 3px; gap: 1px; color: #d0d0d0; }
.val.txt { padding-left: 2px; }
.i-pf { width: 12px; height: 12px; }
.field.dim .val { background: #313131; color: #8a8a8a; }
.pick { width: 12px; height: 12px; margin-left: auto; margin-right: 2px; color: #b0b0b0; }
.field.dim .pick { color: #777; }

/* drawn annotation over the screenshot */
.annotation { position: absolute; left: 0; top: 0; width: 1969px; height: 852px; pointer-events: none; }
.ink { fill: none; stroke: #e61c1c; stroke-width: 4; stroke-linecap: round; stroke-linejoin: round; }
```
